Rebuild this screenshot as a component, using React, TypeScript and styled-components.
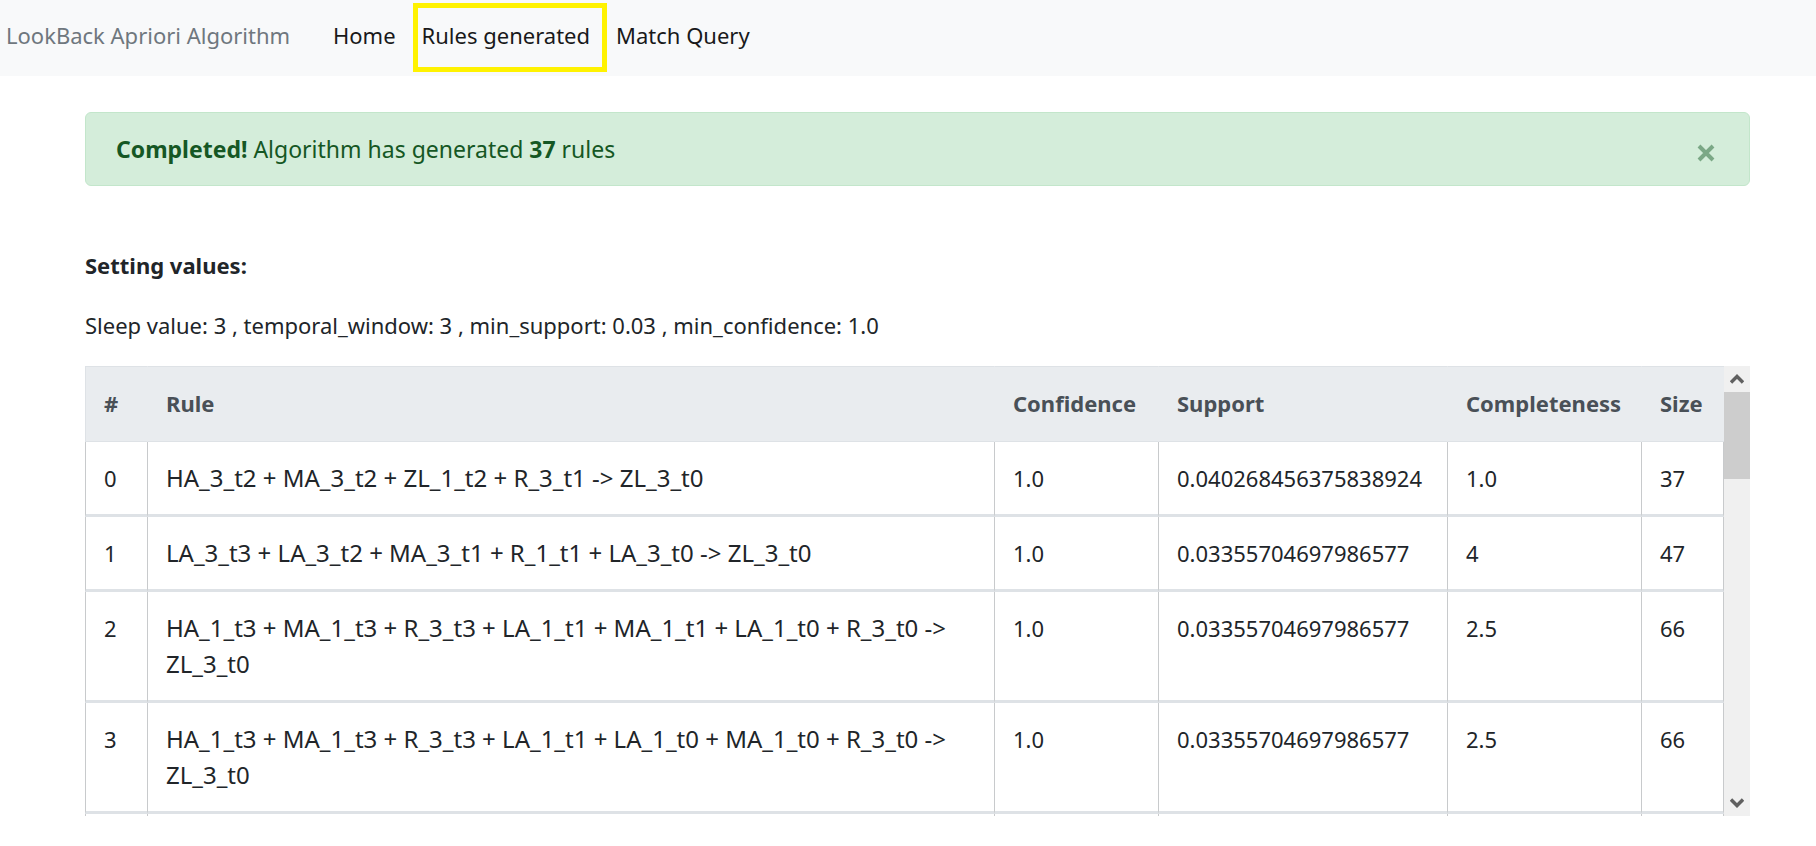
import React, { useRef, useState } from "react";
import styled, { createGlobalStyle } from "styled-components";

const GlobalStyle = createGlobalStyle`
  *, *::before, *::after { box-sizing: border-box; }
  body {
    margin: 0;
    background: #fff;
    color: #212529;
    font-family: "Segoe UI", "Noto Sans", sans-serif;
    font-size: 22px;
    line-height: 36px;
  }
  button { font: inherit; cursor: pointer; }
`;

const Navbar = styled.nav`
  display: flex;
  align-items: flex-start;
  height: 76px;
  padding: 3px 6px;
  background: #f8f9fa;
`;

const Brand = styled.a`
  flex: none;
  width: 318px;
  padding-top: 14px;
  color: #6f777e;
  text-decoration: none;
  white-space: nowrap;
`;

const NavList = styled.ul`
  display: flex;
  margin: 0;
  padding: 0;
  list-style: none;
`;

const NavLink = styled.a<{ $active?: boolean }>`
  display: block;
  height: 69px;
  padding: 9px 12px 0 4px;
  border: 5px solid ${(p) => (p.$active ? "#fff200" : "transparent")};
  color: #19191a;
  text-decoration: none;
  white-space: nowrap;
`;

const Page = styled.main`
  padding: 36px 66px 30px 85px;
`;

const Alert = styled.div`
  display: flex;
  align-items: center;
  justify-content: space-between;
  height: 74px;
  margin-bottom: 61px;
  padding: 0 28px 0 30px;
  border: 1px solid #c3e6cb;
  border-radius: 6px;
  background: #d4edda;
  color: #155724;
  font-size: 23px;
`;

const CloseButton = styled.button`
  display: flex;
  padding: 6px;
  margin-top: 8px;
  border: 0;
  background: none;
  color: #7ba886;
`;

const Settings = styled.section`
  display: flex;
  flex-direction: column;
  gap: 24px;
  margin-bottom: 23px;
`;

const Line = styled.p`
  margin: 0;
`;

const TableFrame = styled.div`
  display: flex;
  height: 450px;
`;

const Viewport = styled.div`
  flex: 1;
  min-width: 0;
  overflow-y: auto;
  scrollbar-width: none;
`;

const Table = styled.table`
  width: 100%;
  table-layout: fixed;
  border-collapse: separate;
  border-spacing: 0;
`;

const Col = styled.col<{ $width?: number }>`
  width: ${(p) => (p.$width ? `${p.$width}px` : "auto")};
`;

const HeadCell = styled.th`
  height: 76px;
  padding: 18px 18px 20px;
  border: 0 solid #dee2e6;
  border-width: 1px 0 1px 1px;
  border-left-color: #e9ecef;
  background: #e9ecef;
  color: #495057;
  text-align: left;
  font-weight: 700;

  &:first-child { border-left-color: #dee2e6; }
`;

const Cell = styled.td`
  height: 75px;
  padding: 18px 17px 18px 18px;
  border-left: 1px solid #c8cacc;
  border-bottom: 3px solid #dee2e6;
  vertical-align: baseline;

  &:last-child { border-right: 1px solid #c8cacc; }
`;

const RuleCell = styled(Cell)`
  font-size: 24px;
`;

const Scrollbar = styled.div`
  display: flex;
  flex-direction: column;
  flex: none;
  width: 26px;
  background: #f0f0f0;
`;

const Arrow = styled.button`
  display: flex;
  align-items: center;
  justify-content: center;
  height: 26px;
  padding: 0;
  border: 0;
  background: #f0f0f0;
  color: #606060;
`;

const Track = styled.div`
  flex: 1;
`;

const Thumb = styled.div`
  height: 87px;
  background: #cdcdcd;
`;

const columns: { title: string; width?: number }[] = [
  { title: "#", width: 62 },
  { title: "Rule" },
  { title: "Confidence", width: 164 },
  { title: "Support", width: 289 },
  { title: "Completeness", width: 194 },
  { title: "Size", width: 83 },
];

const rows = [
  ["0", "HA_3_t2 + MA_3_t2 + ZL_1_t2 + R_3_t1 -> ZL_3_t0", "1.0", "0.040268456375838924", "1.0", "37"],
  ["1", "LA_3_t3 + LA_3_t2 + MA_3_t1 + R_1_t1 + LA_3_t0 -> ZL_3_t0", "1.0", "0.03355704697986577", "4", "47"],
  ["2", "HA_1_t3 + MA_1_t3 + R_3_t3 + LA_1_t1 + MA_1_t1 + LA_1_t0 + R_3_t0 -> ZL_3_t0", "1.0", "0.03355704697986577", "2.5", "66"],
  ["3", "HA_1_t3 + MA_1_t3 + R_3_t3 + LA_1_t1 + LA_1_t0 + MA_1_t0 + R_3_t0 -> ZL_3_t0", "1.0", "0.03355704697986577", "2.5", "66"],
  ["", "", "", "", "", ""],
];

const Chevron = ({ up }: { up?: boolean }) => (
  <svg width="14" height="12" viewBox="0 0 14 12" aria-hidden="true">
    <path d={up ? "M1 9.5 7 3.5l6 6" : "M1 2.5l6 6 6-6"} fill="none" stroke="currentColor" strokeWidth="3.4" />
  </svg>
);

export default function App() {
  const viewport = useRef<HTMLDivElement>(null);
  const track = useRef<HTMLDivElement>(null);
  const [offset, setOffset] = useState(0);
  const [alertOpen, setAlertOpen] = useState(true);

  const onScroll = () => {
    const v = viewport.current;
    const t = track.current;
    if (!v || !t) return;
    const range = v.scrollHeight - v.clientHeight;
    setOffset(range > 0 ? (v.scrollTop / range) * (t.clientHeight - 87) : 0);
  };

  return (
    <>
      <GlobalStyle />
      <Navbar>
        <Brand href="#">LookBack Apriori Algorithm</Brand>
        <NavList>
          <li><NavLink href="#home">Home</NavLink></li>
          <li><NavLink href="#rules" $active aria-current="page">Rules generated</NavLink></li>
          <li><NavLink href="#match">Match Query</NavLink></li>
        </NavList>
      </Navbar>
      <Page>
        {alertOpen && (
          <Alert role="alert">
            <span>
              <strong>Completed!</strong> Algorithm has generated <strong>37</strong> rules
            </span>
            <CloseButton type="button" aria-label="Close" onClick={() => setAlertOpen(false)}>
              <svg width="18" height="18" viewBox="0 0 18 18" aria-hidden="true">
                <path d="M2 2l14 14M16 2L2 16" stroke="currentColor" strokeWidth="4" />
              </svg>
            </CloseButton>
          </Alert>
        )}
        <Settings>
          <Line><strong>Setting values:</strong></Line>
          <Line>Sleep value: 3 , temporal_window: 3 , min_support: 0.03 , min_confidence: 1.0</Line>
        </Settings>
        <TableFrame>
          <Viewport ref={viewport} onScroll={onScroll}>
            <Table>
              <colgroup>
                {columns.map((c) => <Col key={c.title} $width={c.width} />)}
              </colgroup>
              <thead>
                <tr>
                  {columns.map((c) => <HeadCell key={c.title} scope="col">{c.title}</HeadCell>)}
                </tr>
              </thead>
              <tbody>
                {rows.map(([index, rule, ...values], i) => (
                  <tr key={i}>
                    <Cell>{index}</Cell>
                    <RuleCell>{rule}</RuleCell>
                    {values.map((value, j) => <Cell key={j}>{value}</Cell>)}
                  </tr>
                ))}
              </tbody>
            </Table>
          </Viewport>
          <Scrollbar>
            <Arrow type="button" aria-label="Scroll up" onClick={() => viewport.current?.scrollBy({ top: -75 })}>
              <Chevron up />
            </Arrow>
            <Track ref={track}>
              <Thumb style={{ transform: `translateY(${offset}px)` }} />
            </Track>
            <Arrow type="button" aria-label="Scroll down" onClick={() => viewport.current?.scrollBy({ top: 75 })}>
              <Chevron />
            </Arrow>
          </Scrollbar>
        </TableFrame>
      </Page>
    </>
  );
}
